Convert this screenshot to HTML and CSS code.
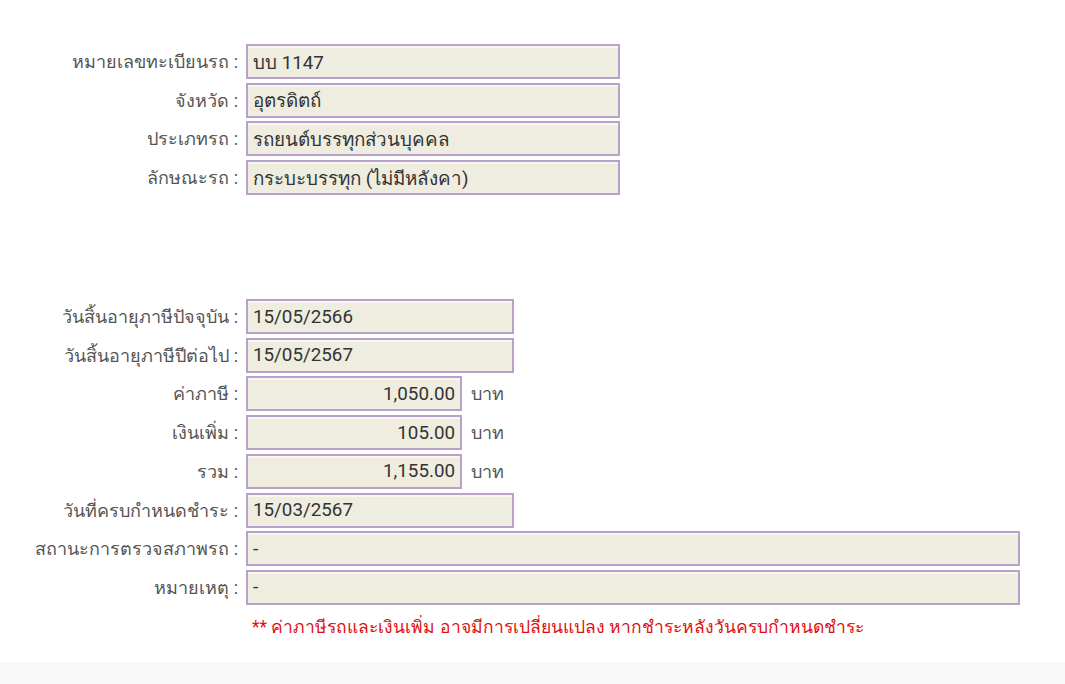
FILE: index.html
```html
<!DOCTYPE html>
<html lang="th">
<head>
<meta charset="utf-8">
<link rel="stylesheet" href="styles.css">
</head>
<body>
<div class="page">
  <div class="group group-car">
    <div class="row"><div class="label">หมายเลขทะเบียนรถ :</div><div class="field w-md">บบ 1147</div></div>
    <div class="row"><div class="label">จังหวัด :</div><div class="field w-md">อุตรดิตถ์</div></div>
    <div class="row"><div class="label">ประเภทรถ :</div><div class="field w-md">รถยนต์บรรทุกส่วนบุคคล</div></div>
    <div class="row"><div class="label">ลักษณะรถ :</div><div class="field w-md">กระบะบรรทุก (ไม่มีหลังคา)</div></div>
  </div>
  <div class="group group-tax">
    <div class="row"><div class="label">วันสิ้นอายุภาษีปัจจุบัน :</div><div class="field w-sm">15/05/2566</div></div>
    <div class="row"><div class="label">วันสิ้นอายุภาษีปีต่อไป :</div><div class="field w-sm">15/05/2567</div></div>
    <div class="row"><div class="label">ค่าภาษี :</div><div class="field w-xs num">1,050.00</div><div class="unit">บาท</div></div>
    <div class="row"><div class="label">เงินเพิ่ม :</div><div class="field w-xs num">105.00</div><div class="unit">บาท</div></div>
    <div class="row"><div class="label">รวม :</div><div class="field w-xs num">1,155.00</div><div class="unit">บาท</div></div>
    <div class="row"><div class="label">วันที่ครบกำหนดชำระ :</div><div class="field w-sm">15/03/2567</div></div>
    <div class="row"><div class="label">สถานะการตรวจสภาพรถ :</div><div class="field w-lg">-</div></div>
    <div class="row"><div class="label">หมายเหตุ :</div><div class="field w-lg">-</div></div>
    <div class="note">** ค่าภาษีรถและเงินเพิ่ม อาจมีการเปลี่ยนแปลง หากชำระหลังวันครบกำหนดชำระ</div>
  </div>
</div>
<div class="footer"></div>
</body>
</html>
```

FILE: styles.css
```css
html, body {
  margin: 0;
  padding: 0;
  background: #ffffff;
  font-family: Roboto, "Noto Sans", "DejaVu Sans", sans-serif;
}
.page {
  height: 662px;
  box-sizing: border-box;
  padding-top: 44px;
}
.group {
  display: flex;
  flex-direction: column;
  gap: 3.7px;
}
.group-tax {
  margin-top: 104px;
}
.row {
  display: flex;
  align-items: center;
  height: 35px;
}
.label {
  width: 246px;
  flex: none;
  text-align: right;
  padding-right: 8px;
  box-sizing: border-box;
  color: #555555;
  font-size: 18px;
  white-space: nowrap;
}
.field {
  height: 35px;
  box-sizing: border-box;
  border: 2px solid #b8a2cc;
  background: #eeeddf;
  box-shadow: inset 0 2px 0 #f7f7f0;
  color: #333333;
  font-size: 18.8px;
  padding: 0 5px;
  display: flex;
  align-items: center;
  white-space: nowrap;
}
.w-md { width: 374px; }
.w-sm { width: 268px; }
.w-xs { width: 216px; }
.w-lg { width: 774px; }
.num { justify-content: flex-end; }
.unit {
  margin-left: 9px;
  color: #555555;
  font-size: 18px;
}
.note {
  margin-left: 252px;
  margin-top: 4px;
  color: #dd1111;
  font-size: 17.5px;
}
.footer {
  height: 22px;
  background: #f8f8f8;
}
```
